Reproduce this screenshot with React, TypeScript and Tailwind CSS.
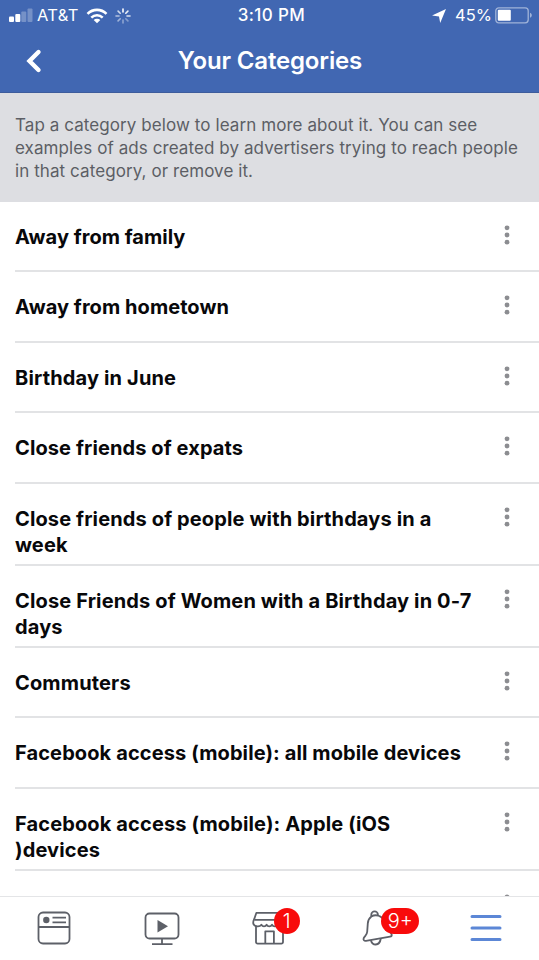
import type { ReactNode } from 'react';

interface Category {
  name: string;
  tracking: string;
}

const CATEGORIES: Category[] = [
  { name: 'Away from family', tracking: 'tracking-[0.03px]' },
  { name: 'Away from hometown', tracking: 'tracking-[0.06px]' },
  { name: 'Birthday in June', tracking: 'tracking-[0.15px]' },
  { name: 'Close friends of expats', tracking: 'tracking-[0.1px]' },
  { name: 'Close friends of people with birthdays in a week', tracking: 'tracking-[0.13px]' },
  { name: 'Close Friends of Women with a Birthday in 0-7 days', tracking: 'tracking-[0.14px]' },
  { name: 'Commuters', tracking: 'tracking-[0.15px]' },
  { name: 'Facebook access (mobile): all mobile devices', tracking: 'tracking-[0.11px]' },
  { name: 'Facebook access (mobile): Apple (iOS )devices', tracking: 'tracking-[0.13px]' },
];

function StatusBar() {
  return (
    <div className="grid h-[31px] grid-cols-3 items-center text-[16.5px] leading-none text-white">
      <div className="flex items-center pl-[9px]">
        <svg className="h-[15px] w-[24px]" viewBox="0 0 24 15" fill="currentColor" aria-hidden="true">
          <rect x="0" y="8.5" width="5" height="5.5" rx="1" />
          <rect x="6.3" y="6" width="5" height="8" rx="1" />
          <rect x="12.3" y="3.5" width="5" height="10.5" rx="1" opacity=".28" />
          <rect x="18.5" y="0.5" width="5" height="13.5" rx="1" opacity=".28" />
        </svg>
        <span className="ml-[4px] w-[42px] tracking-[0.3px] whitespace-nowrap">AT&amp;T</span>
        <svg className="ml-[7px] h-[16px] w-[22px]" viewBox="0 0 22 16" aria-hidden="true">
          <path d="M1.5 5.8a13.5 13.5 0 0 1 19 0" fill="none" stroke="currentColor" strokeWidth="2.6" />
          <path d="M5.3 9.6a8.2 8.2 0 0 1 11.4 0" fill="none" stroke="currentColor" strokeWidth="2.6" />
          <path d="M11 15.2 7.7 12a4.7 4.7 0 0 1 6.6 0Z" fill="currentColor" />
        </svg>
        <svg className="ml-[7px] h-[16px] w-[16px]" viewBox="0 0 16 16" stroke="currentColor" strokeWidth="1.6" strokeLinecap="round" aria-hidden="true">
          <path d="M8 1v3" />
          <path d="m12.9 3.1-2.1 2.1" opacity=".9" />
          <path d="M15 8h-3" opacity=".8" />
          <path d="m12.9 12.9-2.1-2.1" opacity=".35" />
          <path d="M8 15v-3" opacity=".4" />
          <path d="m3.1 12.9 2.1-2.1" opacity=".5" />
          <path d="M1 8h3" opacity=".6" />
          <path d="m3.1 3.1 2.1 2.1" opacity=".75" />
        </svg>
      </div>
      <span className="pl-[4px] text-center text-[17px] font-medium tracking-[0.4px]">3:10 PM</span>
      <div className="flex items-center justify-end pr-[6px]">
        <svg className="h-[14px] w-[14px]" viewBox="0 0 14 14" fill="currentColor" aria-hidden="true">
          <path d="M14 0 8.2 14 7 7.4 0 6.6Z" />
        </svg>
        <span className="ml-[9px] w-[36px] whitespace-nowrap">45%</span>
        <svg className="ml-[4px] h-[17px] w-[38px]" viewBox="0 0 38 17" aria-hidden="true">
          <rect x=".8" y=".8" width="32.4" height="15" rx="3" fill="none" stroke="currentColor" strokeOpacity=".5" strokeWidth="1.3" />
          <rect x="2.8" y="2.8" width="13" height="11" rx="1" fill="currentColor" />
          <path d="M35 5.8c2.4.8 2.4 4.2 0 5Z" fill="currentColor" opacity=".5" />
        </svg>
      </div>
    </div>
  );
}

function MoreButton({ label }: { label: string }) {
  return (
    <button type="button" className="mt-[1px] ml-auto mr-[29.5px]" aria-label={label}>
      <svg className="h-[20px] w-[6px]" viewBox="0 0 6 20" fill="#8c8d91" aria-hidden="true">
        <circle cx="3" cy="2.8" r="2.4" />
        <circle cx="3" cy="10" r="2.4" />
        <circle cx="3" cy="17.2" r="2.4" />
      </svg>
    </button>
  );
}

function CategoryRow({ name, tracking }: Category) {
  return (
    <li className="ml-[15px] flex min-h-[70.5px] shrink-0 items-start border-b-2 border-[#e2e3e5] pt-[22px] pb-[6px]">
      <span className={`w-[461px] text-[20px] leading-[26px] font-bold ${tracking}`}>{name}</span>
      <MoreButton label={`Options for ${name}`} />
    </li>
  );
}

function Tab({ label, children }: { label: string; children: ReactNode }) {
  return (
    <button type="button" className="relative flex h-full w-[107.8px] items-center justify-center pb-[2px]" aria-label={label}>
      {children}
    </button>
  );
}

function TabBar() {
  return (
    <nav className="flex h-[64px] shrink-0 border-t border-[#e4e5e7] bg-white text-[#5d6068]">
      <Tab label="News feed">
        <svg className="ml-px h-[36px] w-[36px]" viewBox="0 0 36 36" fill="none" stroke="currentColor" strokeWidth="1.8" aria-hidden="true">
          <rect x="2.5" y="2.5" width="31" height="31" rx="4.5" />
          <path d="M2.5 17h31M16.5 7.7H30M16.5 12.3H30" />
          <circle cx="10.3" cy="10" r="3.2" fill="currentColor" stroke="none" />
        </svg>
      </Tab>
      <Tab label="Watch">
        <svg className="ml-px h-[36px] w-[36px]" viewBox="0 0 36 36" fill="none" stroke="currentColor" strokeWidth="1.8" aria-hidden="true">
          <rect x="1.5" y="3.5" width="33" height="25" rx="4" />
          <path d="M18 28.5v5.5M8 34.2h20.5" />
          <path d="M13.5 10v12.5L24 16.2Z" fill="currentColor" stroke="none" />
        </svg>
      </Tab>
      <Tab label="Marketplace">
        <svg className="h-[36px] w-[36px]" viewBox="0 0 36 36" fill="none" stroke="currentColor" strokeWidth="1.8" strokeLinejoin="round" aria-hidden="true">
          <path d="M5.4 2.8h22l4.4 8v3.7c-1 2.4-4.2 2.4-5.4.3-1.2 2.2-4.2 2.2-5.4 0-1.2 2.2-4.2 2.2-5.4 0-1.2 2.2-4 2.2-5.2 0-1.8 2.4-6.4 2.2-8-.8-.8-2.4.6-4.1 1.2-6Z" />
          <path d="M3.4 9.8H31M5 15.8v16.3a1.6 1.6 0 0 0 1.6 1.6h23.8a1.6 1.6 0 0 0 1.6-1.6V16" />
          <path d="M14.3 33.8V21.3h8.6v12.5" />
        </svg>
        <span className="absolute top-[11px] left-[58px] flex h-[26px] w-[26px] items-center justify-center rounded-full bg-[#f80b0b] text-[20px] leading-none font-light text-white">
          1
        </span>
      </Tab>
      <Tab label="Notifications">
        <svg className="ml-[3px] h-[36px] w-[36px]" viewBox="0 0 36 36" fill="none" stroke="currentColor" strokeWidth="1.8" strokeLinejoin="round" aria-hidden="true">
          <path d="M10.4 6.5c4.5-2.7 10.4-.7 12.8 4.2l2.3 6.6c1.4 4.1 4.8 4.7 5.2 7.4.1 1.2-.4 1.8-1.6 2L5 30.8c-1.8.3-3-.9-2.3-2.6.9-2.2 3.3-3 3.5-6.4l.6-8.4c.2-3.2 1.5-5.4 3.6-6.9Z" />
          <path d="M10.3 6.3V4.7a3.3 3.3 0 0 1 6.6 0v.8M9.8 30.2c.8 2.6 2.5 4.4 5 4.3 2.6-.1 4.4-2.1 5-6" />
        </svg>
        <span className="absolute top-[11px] left-[58px] flex h-[26px] w-[38px] items-center justify-center rounded-full bg-[#f80b0b] text-[20px] leading-none font-light text-white">
          9+
        </span>
      </Tab>
      <Tab label="Menu">
        <svg className="mt-[1px] ml-[1px] h-[28px] w-[32px]" viewBox="0 0 32 28" fill="none" stroke="#5c87d6" strokeWidth="3" strokeLinecap="round" aria-hidden="true">
          <path d="M2 2.5h28M2 14h28M2 25.5h28" />
        </svg>
      </Tab>
    </nav>
  );
}

export default function App() {
  return (
    <div className="flex h-[960px] w-[539px] flex-col overflow-hidden bg-white font-['Inter',sans-serif] text-[#08080a]">
      <header className="h-[93px] shrink-0 border-b border-[#3d5c9c] bg-[#4167b2] text-white">
        <StatusBar />
        <div className="grid h-[60px] grid-cols-[60px_1fr_60px] items-center">
          <button type="button" className="pl-[25px]" aria-label="Back">
            <svg className="h-[26px] w-[18px]" viewBox="0 0 18 26" fill="none" stroke="currentColor" strokeWidth="4.4" strokeLinecap="round" aria-hidden="true">
              <path d="M13.5 4 4.5 13l9 9" />
            </svg>
          </button>
          <h1 className="pl-[1px] text-center text-[24px] leading-[30px] font-semibold tracking-[-0.15px]">Your Categories</h1>
        </div>
      </header>

      <p className="h-[108.5px] shrink-0 bg-[#dddee2] pt-[21px] pl-[15px] text-[17px] leading-[23px] tracking-[0.08px] text-[#5c5e65]">
        Tap a category below to learn more about it. You can see
        <br />
        examples of ads created by advertisers trying to reach people
        <br />
        in that category, or remove it.
      </p>

      <ul className="flex min-h-0 flex-1 flex-col overflow-hidden">
        {CATEGORIES.map((category) => (
          <CategoryRow key={category.name} {...category} />
        ))}
        <li className="flex shrink-0 pt-[22px]">
          <MoreButton label="More options" />
        </li>
      </ul>

      <TabBar />
    </div>
  );
}
